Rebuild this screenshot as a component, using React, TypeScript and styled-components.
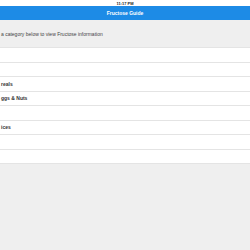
import React from "react";
import styled, { createGlobalStyle } from "styled-components";

const GlobalStyle = createGlobalStyle`
  html, body {
    margin: 0;
    padding: 0;
    width: 250px;
    height: 250px;
    overflow: hidden;
    background: #efefef;
    font-family: "Liberation Sans", Arial, sans-serif;
  }
`;

const Screen = styled.div`
  display: flex;
  flex-direction: column;
  width: 250px;
  height: 250px;
  background: #efefef;
  overflow: hidden;
`;

const StatusBar = styled.div`
  height: 6px;
  background: #ffffff;
  display: flex;
  align-items: center;
  justify-content: center;
  font-size: 4px;
  font-weight: bold;
  color: #222;
`;

const NavBar = styled.div`
  height: 14px;
  background: #1d8be6;
  display: flex;
  align-items: center;
  justify-content: center;
  color: #fff;
  font-size: 5px;
  font-weight: bold;
`;

const Hint = styled.div`
  height: 27px;
  display: flex;
  align-items: center;
  padding-left: 1px;
  font-size: 5px;
  color: #444;
  white-space: nowrap;
`;

const List = styled.ul`
  list-style: none;
  margin: 0;
  padding: 0;
  background: #fff;
  border-top: 1px solid #e4e4e4;
`;

const Row = styled.li`
  height: 13.5px;
  border-bottom: 1px solid #e4e4e4;
  display: flex;
  align-items: center;
  padding-left: 1px;
  font-size: 5px;
  font-weight: bold;
  color: #333;
  white-space: nowrap;
`;

// the screen is scrolled, only the tail of each label is in view
const rows = ["", "", "reals", "ggs & Nuts", "", "ices", "", ""];

export default function App() {
  return (
    <>
      <GlobalStyle />
      <Screen>
        <StatusBar>11:17 PM</StatusBar>
        <NavBar>Fructose Guide</NavBar>
        <Hint>a category below to view Fructose information</Hint>
        <List>
          {rows.map((name, i) => (
            <Row key={i}>{name}</Row>
          ))}
        </List>
      </Screen>
    </>
  );
}
